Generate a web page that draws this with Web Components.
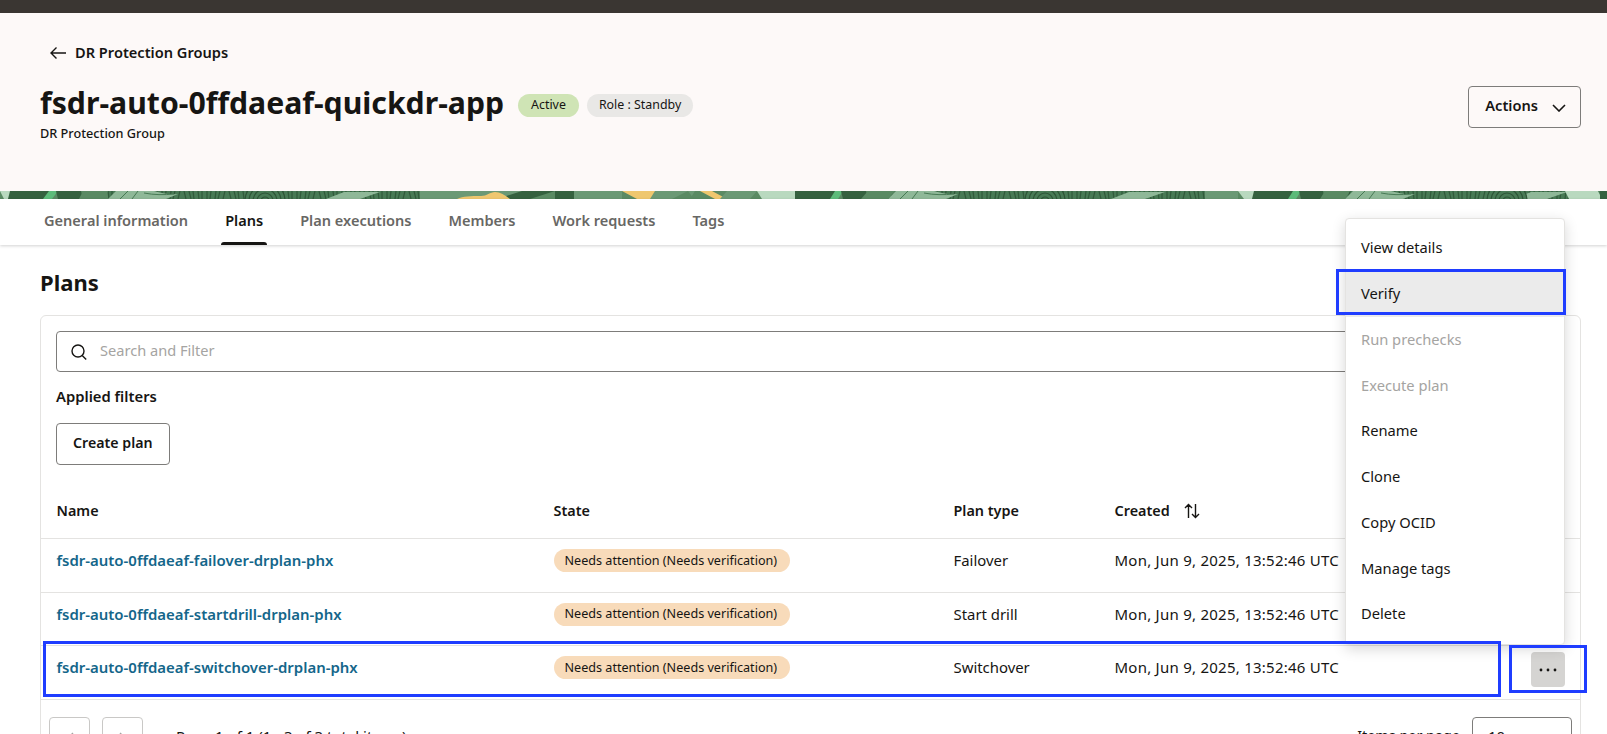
<!DOCTYPE html>
<html lang="en">
<head>
<meta charset="utf-8">
<title>DR Protection Group</title>
<style>
  html, body { margin: 0; height: 734px; overflow: hidden; background: #fff; }
  body { font-family: "Noto Sans", "Liberation Sans", sans-serif; color: #161513; position: relative; }
  .top-bar { height: 13px; background: #3a3632; }
</style>
</head>
<body>
<div class="top-bar"></div>

<page-hero title-text="fsdr-auto-0ffdaeaf-quickdr-app" back="DR Protection Groups" kind="DR Protection Group">
  <status-pill slot="pills" tone="green">Active</status-pill>
  <status-pill slot="pills" tone="gray">Role : Standby</status-pill>
  <oj-btn slot="actions" wide>Actions
    <svg slot="icon" width="14" height="8" viewBox="0 0 14 8" fill="none" stroke="#161513" stroke-width="1.6"><path d="M1 1l6 6 6-6"/></svg>
  </oj-btn>
</page-hero>
<deco-band></deco-band>
<tab-bar>
  <tab-item>General information</tab-item>
  <tab-item active>Plans</tab-item>
  <tab-item>Plan executions</tab-item>
  <tab-item>Members</tab-item>
  <tab-item>Work requests</tab-item>
  <tab-item>Tags</tab-item>
</tab-bar>

<plans-section heading="Plans">
  <search-box placeholder="Search and Filter"></search-box>
  <filter-label>Applied filters</filter-label>
  <oj-btn>Create plan</oj-btn>
  <plan-table>
    <plan-row head>
      <span>Name</span><span>State</span><span>Plan type</span>
      <span class="created">Created
        <svg width="16" height="16" viewBox="0 0 16 16" fill="none" stroke="#161513" stroke-width="1.4" style="vertical-align:-3px;margin-left:10px"><path d="M4.5 15V1.5M1 5l3.5-3.5L8 5M11.5 1v13.5M8 11l3.5 3.5L15 11"/></svg>
      </span>
    </plan-row>
    <plan-row name="fsdr-auto-0ffdaeaf-failover-drplan-phx" type="Failover"></plan-row>
    <plan-row name="fsdr-auto-0ffdaeaf-startdrill-drplan-phx" type="Start drill"></plan-row>
    <plan-row name="fsdr-auto-0ffdaeaf-switchover-drplan-phx" type="Switchover" kebab></plan-row>
  </plan-table>
  <plan-pager></plan-pager>
</plans-section>

<action-menu>
  <menu-entry>View details</menu-entry>
  <menu-entry hot>Verify</menu-entry>
  <menu-entry off>Run prechecks</menu-entry>
  <menu-entry off>Execute plan</menu-entry>
  <menu-entry>Rename</menu-entry>
  <menu-entry>Clone</menu-entry>
  <menu-entry>Copy OCID</menu-entry>
  <menu-entry>Manage tags</menu-entry>
  <menu-entry>Delete</menu-entry>
</action-menu>

<focus-box x="1336" y="269" w="230" h="46"></focus-box>
<focus-box x="43" y="641" w="1458" h="56"></focus-box>
<focus-box x="1509" y="645" w="78" h="48"></focus-box>

<script>
// small helper, every element is just a shadow root with its own style
function shadow(el, css, html) {
  el.attachShadow({ mode: "open" }).innerHTML = `<style>${css}</style>${html}`;
}

class PageHero extends HTMLElement {
  connectedCallback() {
    shadow(this, `
      :host { display: block; height: 178px; box-sizing: border-box; padding: 29px 26px 0 40px; background: #fdf9f8; }
      .back { display: flex; align-items: center; gap: 9px; height: 20px; margin-left: 10px; font-size: 14.6px; font-weight: 600; }
      svg { margin-top: 2px; }
      .row { display: flex; justify-content: space-between; align-items: flex-start; margin-top: 21px; }
      .title { display: flex; align-items: center; height: 40px; gap: 14px; }
      h1 { margin: 0; font-size: 30.2px; line-height: 40px; font-weight: 700; }
      .pills { display: flex; gap: 8px; margin-top: 4px; }
      .kind { font-size: 12.7px; font-weight: 500; line-height: 18px; margin-top: 1px; }
      .act { margin-top: 3px; }
    `, `
      <div class="back">
        <svg width="16" height="12" viewBox="0 0 16 12" fill="none" stroke="#161513" stroke-width="1.4"><path d="M16 6H1M6.5.5L1 6l5.5 5.5"/></svg>
        <span>${this.getAttribute("back")}</span>
      </div>
      <div class="row">
        <div>
          <div class="title"><h1>${this.getAttribute("title-text")}</h1><div class="pills"><slot name="pills"></slot></div></div>
          <div class="kind">${this.getAttribute("kind")}</div>
        </div>
        <div class="act"><slot name="actions"></slot></div>
      </div>`);
  }
}

class StatusPill extends HTMLElement {
  connectedCallback() {
    const bg = this.getAttribute("tone") === "green" ? "#cfe4b5" : "#e9e8e6";
    shadow(this, `
      :host { display: inline-flex; align-items: center; box-sizing: border-box; height: 23px; padding: 0 12px 1px; border-radius: 12px; background: ${bg}; font-size: 12.4px; white-space: nowrap; }
      :host([tone="green"]) { padding: 0 13px 1px; }
    `, `<slot></slot>`);
  }
}

class OjBtn extends HTMLElement {
  connectedCallback() {
    shadow(this, `
      :host { display: inline-flex; align-items: center; box-sizing: border-box; height: 42px; border: 1px solid #7d7c7a; border-radius: 4px; padding: 0 16px 4px; font-size: 14.2px; font-weight: 600; white-space: nowrap; background: transparent; }
      :host([wide]) { gap: 14px; padding: 0 14px 4px 16px; font-size: 14.6px; }
      .ic { display: flex; margin-top: 6px; }
    `, `<slot></slot><span class="ic"><slot name="icon"></slot></span>`);
  }
}

// the strip of camouflage art under the header
class DecoBand extends HTMLElement {
  connectedCallback() {
    const dark = "#35613f", mid = "#5a8a63", soft = "#6b9975", pale = "#b9d9bf", stripe = "#5dbb7a", gold = "#efc76f";
    const polys = [
      [pale, 0, 10, 14], [dark, 10, 49, 47], [stripe, 49, 58, 52], [dark, 56, 81, 83], [mid, 83, 108, 104],
      [soft, 420, 522, 522], [dark, 522, 555, 530], [dark, 555, 574, 574], [soft, 574, 622, 622],
      [gold, 622, 655, 670], [soft, 655, 695, 690], [gold, 700, 712, 727], [soft, 727, 757, 750],
      [pale, 757, 795, 800], [dark, 795, 835, 835], [stripe, 835, 843, 838], [dark, 841, 866, 868], [mid, 868, 895, 888],
      [soft, 1205, 1238, 1238], [pale, 1238, 1254, 1260], [dark, 1254, 1293, 1291], [stripe, 1293, 1301, 1296],
      [dark, 1299, 1323, 1325], [mid, 1325, 1350, 1345], [pale, 1565, 1598, 1602], [dark, 1600, 1607, 1607]
    ].map(([c, a, b, d]) => `<polygon fill="${c}" points="${a},0 ${b},0 ${d},8 ${a + d - b},8"/>`).join("");
    const gold2 = `<path fill="${gold}" d="M457 8c6-3 14-3 24-3 6 0 9-4 14-4 5 0 10 3 15 7z"/>`;
    const print = (x, w, cx) => {
      let lines = "";
      for (let i = x; i < x + w; i += 4 + (i % 3)) {
        lines += `<path d="M${i} 0l${(i % 5) - 2} 8" stroke="#315a3b" stroke-width="1.2"/>`;
      }
      return `<rect x="${x}" width="${w}" height="8" fill="#487a55"/>${lines}
        <path fill="#8fb898" d="M${x} 8l8-8h38c8 2 14 4 24 3l-12 5z"/>
        <path d="M${x + 12} 8l8-8M${x + 24} 8l6-8M${x + 36} 2c10 2 20 2 30 1" stroke="#487a55" stroke-width="1" fill="none"/>
        <path fill="#8fb898" d="M${x + w - 76} 1h36l-20 7h-34z"/>
        ${[20, 16, 12, 8, 4].map(r => `<circle cx="${cx}" cy="10" r="${r}" fill="#487a55" stroke="#2e5537" stroke-width="1.2"/>`).join("")}`;
    };
    shadow(this, `:host { display: block; height: 8px; background: ${mid}; overflow: hidden; } svg { display: block; }`,
      `<svg width="1607" height="8" viewBox="0 0 1607 8">
        <rect width="1607" height="8" fill="${mid}"/>
        ${print(108, 312, 265)}${print(888, 317, 1045)}${print(1345, 262, 1507)}
        ${polys}${gold2}
        <path fill="${mid}" d="M672 8l16-8 6 8z"/>
      </svg>`);
  }
}

class TabBar extends HTMLElement {
  connectedCallback() {
    shadow(this, `
      :host { display: flex; position: relative; height: 46px; box-sizing: border-box; padding-left: 40px; gap: 29px; background: #fff; box-shadow: 0 1px 3px rgba(0,0,0,.18); }
    `, `<slot></slot>`);
  }
}

class TabItem extends HTMLElement {
  connectedCallback() {
    shadow(this, `
      :host { display: flex; position: relative; box-sizing: border-box; height: 43px; padding: 0 4px 2px; align-items: center; font-size: 14.55px; font-weight: 600; color: #686764; white-space: nowrap; }
      :host([active]) { color: #161513; }
      :host([active])::after { content: ""; position: absolute; left: 0; right: 0; bottom: -3px; height: 3px; background: #161513; border-radius: 4px 4px 0 0; }
    `, `<slot></slot>`);
  }
}

class PlansSection extends HTMLElement {
  connectedCallback() {
    shadow(this, `
      :host { display: block; padding: 22px 26px 0 40px; }
      h2 { margin: 0 0 18px; font-size: 22px; line-height: 30px; font-weight: 700; }
      .card { border: 1px solid #e4e3e1; border-radius: 6px; padding-top: 15px; height: 600px; box-sizing: border-box; }
      ::slotted(search-box), ::slotted(filter-label), ::slotted(oj-btn) { margin-left: 15px; }
    `, `<h2>${this.getAttribute("heading")}</h2><div class="card"><slot></slot></div>`);
  }
}

class SearchBox extends HTMLElement {
  connectedCallback() {
    shadow(this, `
      :host { display: flex; align-items: center; gap: 13px; box-sizing: border-box; width: 1505px; height: 41px; padding-left: 14px; border: 1px solid #7d7c7a; border-radius: 4px; font-size: 14.6px; color: #a5a4a2; }
      span { padding-bottom: 3px; }
    `, `<svg width="16" height="16" viewBox="0 0 16 16" fill="none" stroke="#161513" stroke-width="1.4"><circle cx="7" cy="7" r="6"/><path d="M11.2 11.5l4 4"/></svg><span>${this.getAttribute("placeholder")}</span>`);
  }
}

class FilterLabel extends HTMLElement {
  connectedCallback() {
    shadow(this, `:host { display: block; margin: 14px 0 17px; font-size: 14.8px; line-height: 20px; font-weight: 600; }`, `<slot></slot>`);
  }
}

class PlanTable extends HTMLElement {
  connectedCallback() {
    shadow(this, `:host { display: block; margin-top: 21px; }`, `<slot></slot>`);
  }
}

class PlanRow extends HTMLElement {
  connectedCallback() {
    const name = this.getAttribute("name");
    const body = this.hasAttribute("head") ? `<slot></slot>` : `
      <a>${name}</a>
      <span><span class="pill">Needs attention (Needs verification)</span></span>
      <span>${this.getAttribute("type")}</span>
      <span class="date">Mon, Jun 9, 2025, 13:52:46 UTC</span>
      ${this.hasAttribute("kebab") ? `<button><svg width="18" height="4" viewBox="0 0 18 4" fill="#161513"><circle cx="2" cy="2" r="1.4"/><circle cx="9" cy="2" r="1.4"/><circle cx="16" cy="2" r="1.4"/></svg></button>` : ""}`;
    shadow(this, `
      :host { display: grid; grid-template-columns: 497px 400px 161px 1fr 34px; align-items: center; box-sizing: border-box; height: 53.5px; padding: 0 15px 10px 15.5px; border-bottom: 1px solid #e4e3e1; font-size: 14.9px; white-space: nowrap; }
      :host([head]) { height: 53px; padding-bottom: 3px; font-weight: 600; font-size: 14.4px; }
      a { color: #14668a; font-weight: 600; font-size: 14.95px; }
      .date { letter-spacing: .25px; font-size: 15px; }
      .pill { display: inline-flex; align-items: center; box-sizing: border-box; height: 23px; width: 236px; margin-top: 1px; padding: 0 0 1px 11px; border-radius: 12px; background: #f8dbba; font-size: 12.6px; }
      button { grid-column: 5; display: flex; align-items: center; justify-content: center; width: 34px; height: 35px; margin-top: 5px; padding: 0; border: 0; border-radius: 4px; background: #d5d4d2; }
    `, body);
  }
}

class PlanPager extends HTMLElement {
  connectedCallback() {
    shadow(this, `
      :host { display: flex; align-items: flex-start; height: 42px; margin-top: 17px; padding: 0 8px 0 8px; font-size: 15px; white-space: nowrap; }
      .nav { display: flex; align-items: center; justify-content: center; box-sizing: border-box; width: 41px; height: 42px; border: 1px solid #c9c8c6; border-radius: 4px; margin-right: 12px; }
      .txt { margin-left: 21px; padding-top: 9px; }
      .per { margin-left: auto; margin-right: 12px; padding-top: 9px; font-size: 14.4px; }
      .sel { box-sizing: border-box; width: 100px; height: 42px; padding: 8px 0 0 15px; border: 1px solid #7d7c7a; border-radius: 4px; }
    `, `
      <div class="nav"><svg width="8" height="12" viewBox="0 0 8 12" fill="none" stroke="#a5a4a2" stroke-width="1.4"><path d="M7 1L2 6l5 5"/></svg></div>
      <div class="nav"><svg width="8" height="12" viewBox="0 0 8 12" fill="none" stroke="#a5a4a2" stroke-width="1.4"><path d="M1 1l5 5-5 5"/></svg></div>
      <span class="txt">Page 1 of 1 (1 - 3 of 3 total items)</span>
      <span class="per">Items per page</span>
      <div class="sel">10</div>`);
  }
}

class ActionMenu extends HTMLElement {
  connectedCallback() {
    shadow(this, `
      :host { position: absolute; left: 1345px; top: 218px; width: 220px; height: 427px; box-sizing: border-box; padding-top: 6px; background: #fff; border: 1px solid #e4e3e1; border-radius: 4px; box-shadow: 0 4px 14px rgba(0,0,0,.16); }
    `, `<slot></slot>`);
  }
}

class MenuEntry extends HTMLElement {
  connectedCallback() {
    shadow(this, `
      :host { display: flex; align-items: center; box-sizing: border-box; height: 45.75px; padding: 0 0 1px 15px; font-size: 14.7px; }
      :host([hot]) { background: #ebebeb; }
      :host([off]) { color: #a5a4a2; }
    `, `<slot></slot>`);
  }
}

// blue annotation rectangles drawn over the screenshot
class FocusBox extends HTMLElement {
  connectedCallback() {
    const a = (n) => this.getAttribute(n) + "px";
    shadow(this, `
      :host { position: absolute; left: ${a("x")}; top: ${a("y")}; width: ${a("w")}; height: ${a("h")}; box-sizing: border-box; border: 3px solid #1f3dff; pointer-events: none; }
    `, ``);
  }
}

customElements.define("page-hero", PageHero);
customElements.define("status-pill", StatusPill);
customElements.define("oj-btn", OjBtn);
customElements.define("deco-band", DecoBand);
customElements.define("tab-bar", TabBar);
customElements.define("tab-item", TabItem);
customElements.define("plans-section", PlansSection);
customElements.define("search-box", SearchBox);
customElements.define("filter-label", FilterLabel);
customElements.define("plan-table", PlanTable);
customElements.define("plan-row", PlanRow);
customElements.define("plan-pager", PlanPager);
customElements.define("action-menu", ActionMenu);
customElements.define("menu-entry", MenuEntry);
customElements.define("focus-box", FocusBox);
</script>
</body>
</html>
